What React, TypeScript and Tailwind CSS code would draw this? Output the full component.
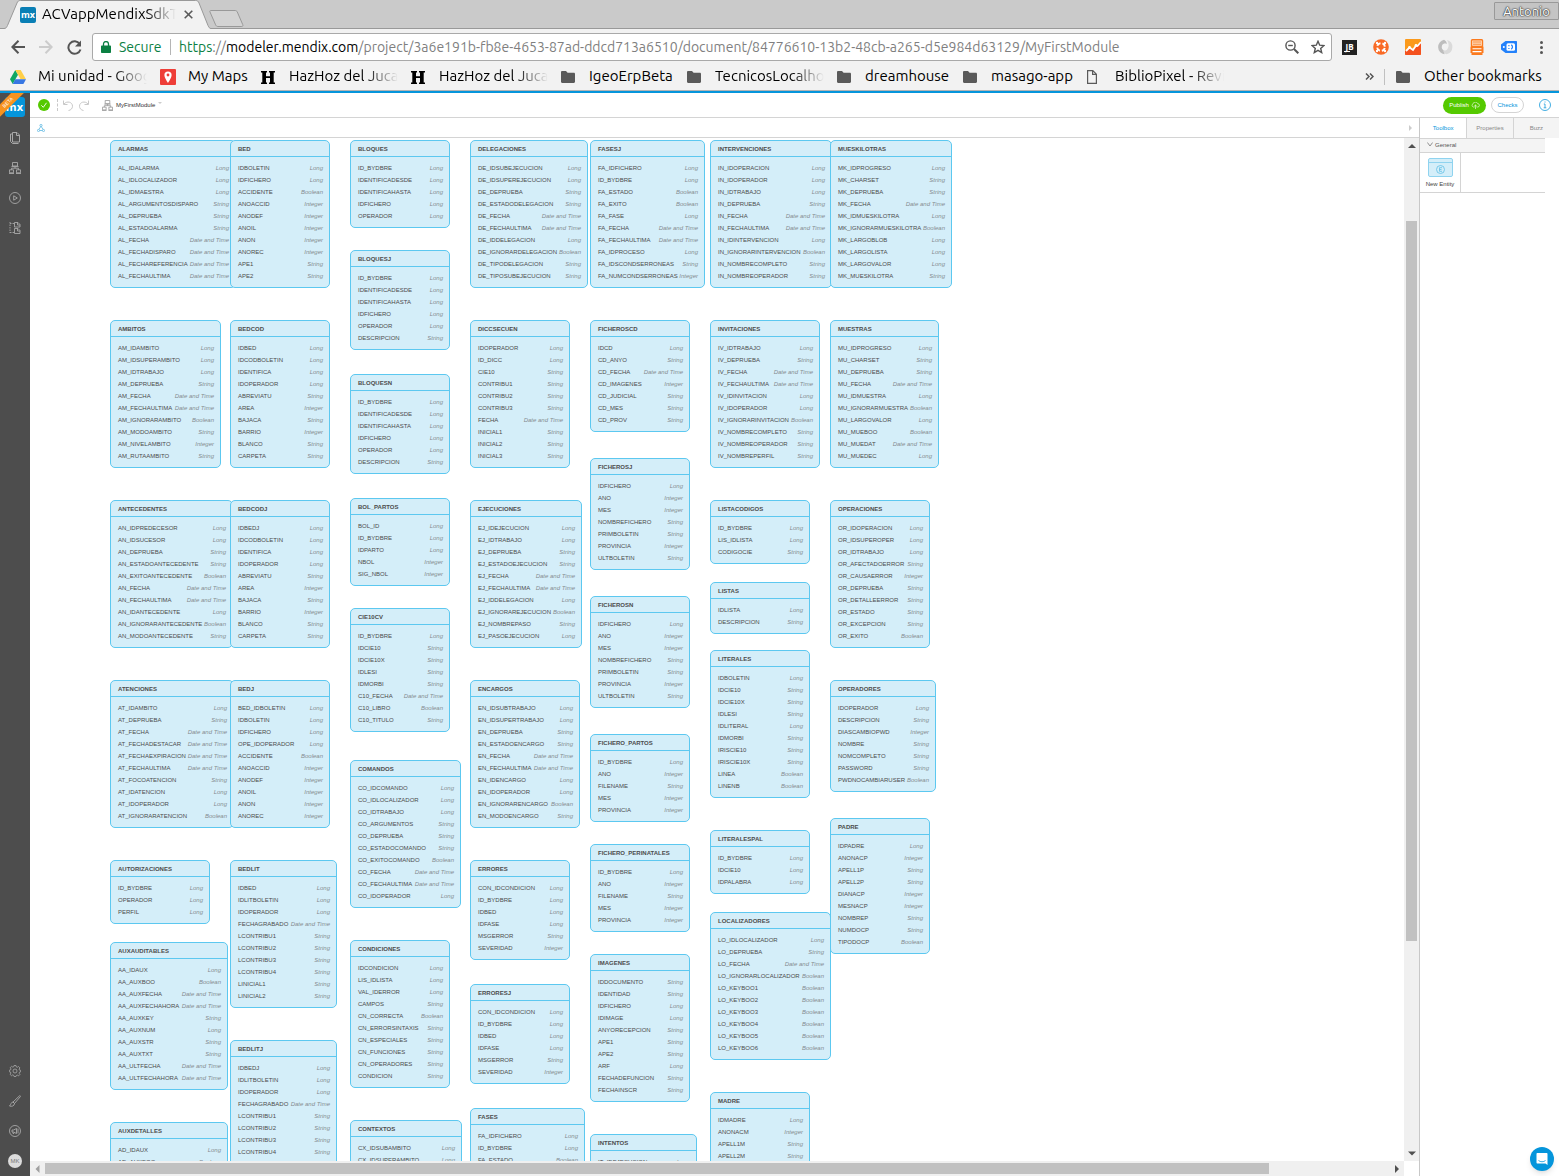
import React from 'react';

type Attr = [string, string];
type Entity = { name: string; x: number; y: number; w: number; attrs: Attr[] };

const TYPES: Record<string, string> = {
  L: 'Long',
  S: 'String',
  B: 'Boolean',
  I: 'Integer',
  D: 'Date and Time',
};

function entity(name: string, x: number, y: number, w: number, attrs: string): Entity {
  return {
    name,
    x,
    y,
    w,
    attrs: attrs.split(' ').map((a) => {
      const [n, t] = a.split(':');
      return [n, TYPES[t]] as Attr;
    }),
  };
}

const ENTITIES: Entity[] = [
  entity('ALARMAS', 80, 2, 126, 'AL_IDALARMA:L AL_IDLOCALIZADOR:L AL_IDMAESTRA:L AL_ARGUMENTOSDISPARO:S AL_DEPRUEBA:S AL_ESTADOALARMA:S AL_FECHA:D AL_FECHADISPARO:D AL_FECHAREFERENCIA:D AL_FECHAULTIMA:D'),
  entity('AMBITOS', 80, 182, 111, 'AM_IDAMBITO:L AM_IDSUPERAMBITO:L AM_IDTRABAJO:L AM_DEPRUEBA:S AM_FECHA:D AM_FECHAULTIMA:D AM_IGNORARAMBITO:B AM_MODOAMBITO:S AM_NIVELAMBITO:I AM_RUTAAMBITO:S'),
  entity('ANTECEDENTES', 80, 362, 123, 'AN_IDPREDECESOR:L AN_IDSUCESOR:L AN_DEPRUEBA:S AN_ESTADOANTECEDENTE:S AN_EXITOANTECEDENTE:B AN_FECHA:D AN_FECHAULTIMA:D AN_IDANTECEDENTE:L AN_IGNORARANTECEDENTE:B AN_MODOANTECEDENTE:S'),
  entity('ATENCIONES', 80, 542, 124, 'AT_IDAMBITO:L AT_DEPRUEBA:S AT_FECHA:D AT_FECHADESTACAR:D AT_FECHAEXPIRACION:D AT_FECHAULTIMA:D AT_FOCOATENCION:S AT_IDATENCION:L AT_IDOPERADOR:L AT_IGNORARATENCION:B'),
  entity('AUTORIZACIONES', 80, 722, 100, 'ID_BYDBRE:L OPERADOR:L PERFIL:L'),
  entity('AUXAUDITABLES', 80, 804, 118, 'AA_IDAUX:L AA_AUXBOO:B AA_AUXFECHA:D AA_AUXFECHAHORA:D AA_AUXKEY:S AA_AUXNUM:L AA_AUXSTR:S AA_AUXTXT:S AA_ULTFECHA:D AA_ULTFECHAHORA:D'),
  entity('AUXDETALLES', 80, 984, 118, 'AD_IDAUX:L AD_AUXBOO:B AD_AUXFECHA:D'),
  entity('BED', 200, 2, 100, 'IDBOLETIN:L IDFICHERO:L ACCIDENTE:B ANOACCID:I ANODEF:I ANOIL:I ANON:I ANOREC:I APE1:S APE2:S'),
  entity('BEDCOD', 200, 182, 100, 'IDBED:L IDCODBOLETIN:L IDENTIFICA:L IDOPERADOR:L ABREVIATU:S AREA:I BAJACA:S BARRIO:I BLANCO:S CARPETA:S'),
  entity('BEDCODJ', 200, 362, 100, 'IDBEDJ:L IDCODBOLETIN:L IDENTIFICA:L IDOPERADOR:L ABREVIATU:S AREA:I BAJACA:S BARRIO:I BLANCO:S CARPETA:S'),
  entity('BEDJ', 200, 542, 100, 'BED_IDBOLETIN:L IDBOLETIN:L IDFICHERO:L OPE_IDOPERADOR:L ACCIDENTE:B ANOACCID:I ANODEF:I ANOIL:I ANON:I ANOREC:I'),
  entity('BEDLIT', 200, 722, 107, 'IDBED:L IDLITBOLETIN:L IDOPERADOR:L FECHAGRABADO:D LCONTRIBU1:S LCONTRIBU2:S LCONTRIBU3:S LCONTRIBU4:S LINICIAL1:S LINICIAL2:S'),
  entity('BEDLITJ', 200, 902, 107, 'IDBEDJ:L IDLITBOLETIN:L IDOPERADOR:L FECHAGRABADO:D LCONTRIBU1:S LCONTRIBU2:S LCONTRIBU3:S LCONTRIBU4:S LINICIAL1:S LINICIAL2:S'),
  entity('BLOQUES', 320, 2, 100, 'ID_BYDBRE:L IDENTIFICADESDE:L IDENTIFICAHASTA:L IDFICHERO:L OPERADOR:L'),
  entity('BLOQUESJ', 320, 112, 100, 'ID_BYDBRE:L IDENTIFICADESDE:L IDENTIFICAHASTA:L IDFICHERO:L OPERADOR:L DESCRIPCION:S'),
  entity('BLOQUESN', 320, 236, 100, 'ID_BYDBRE:L IDENTIFICADESDE:L IDENTIFICAHASTA:L IDFICHERO:L OPERADOR:L DESCRIPCION:S'),
  entity('BOL_PARTOS', 320, 360, 100, 'BOL_ID:L ID_BYDBRE:L IDPARTO:L NBOL:I SIG_NBOL:I'),
  entity('CIE10CV', 320, 470, 100, 'ID_BYDBRE:L IDCIE10:S IDCIE10X:S IDLESI:S IDMORBI:S C10_FECHA:D C10_LIBRO:B C10_TITULO:S'),
  entity('COMANDOS', 320, 622, 111, 'CO_IDCOMANDO:L CO_IDLOCALIZADOR:L CO_IDTRABAJO:L CO_ARGUMENTOS:S CO_DEPRUEBA:S CO_ESTADOCOMANDO:S CO_EXITOCOMANDO:B CO_FECHA:D CO_FECHAULTIMA:D CO_IDOPERADOR:L'),
  entity('CONDICIONES', 320, 802, 100, 'IDCONDICION:L LIS_IDLISTA:L VAL_IDERROR:L CAMPOS:S CN_CORRECTA:B CN_ERRORSINTAXIS:S CN_ESPECIALES:S CN_FUNCIONES:S CN_OPERADORES:S CONDICION:S'),
  entity('CONTEXTOS', 320, 982, 112, 'CX_IDSUBAMBITO:L CX_IDSUPERAMBITO:L CX_DEPRUEBA:S'),
  entity('DELEGACIONES', 440, 2, 118, 'DE_IDSUBEJECUCION:L DE_IDSUPEREJECUCION:L DE_DEPRUEBA:S DE_ESTADODELEGACION:S DE_FECHA:D DE_FECHAULTIMA:D DE_IDDELEGACION:L DE_IGNORARDELEGACION:B DE_TIPODELEGACION:S DE_TIPOSUBEJECUCION:S'),
  entity('DICCSECUEN', 440, 182, 100, 'IDOPERADOR:L ID_DICC:L CIE10:S CONTRIBU1:S CONTRIBU2:S CONTRIBU3:S FECHA:D INICIAL1:S INICIAL2:S INICIAL3:S'),
  entity('EJECUCIONES', 440, 362, 112, 'EJ_IDEJECUCION:L EJ_IDTRABAJO:L EJ_DEPRUEBA:S EJ_ESTADOEJECUCION:S EJ_FECHA:D EJ_FECHAULTIMA:D EJ_IDDELEGACION:L EJ_IGNORAREJECUCION:B EJ_NOMBREPASO:S EJ_PASOEJECUCION:L'),
  entity('ENCARGOS', 440, 542, 110, 'EN_IDSUBTRABAJO:L EN_IDSUPERTRABAJO:L EN_DEPRUEBA:S EN_ESTADOENCARGO:S EN_FECHA:D EN_FECHAULTIMA:D EN_IDENCARGO:L EN_IDOPERADOR:L EN_IGNORARENCARGO:B EN_MODOENCARGO:S'),
  entity('ERRORES', 440, 722, 100, 'CON_IDCONDICION:L ID_BYDBRE:L IDBED:L IDFASE:L MSGERROR:S SEVERIDAD:I'),
  entity('ERRORESJ', 440, 846, 100, 'CON_IDCONDICION:L ID_BYDBRE:L IDBED:L IDFASE:L MSGERROR:S SEVERIDAD:I'),
  entity('FASES', 440, 970, 115, 'FA_IDFICHERO:L ID_BYDBRE:L FA_ESTADO:B FA_EXITO:B'),
  entity('FASESJ', 560, 2, 115, 'FA_IDFICHERO:L ID_BYDBRE:L FA_ESTADO:B FA_EXITO:B FA_FASE:L FA_FECHA:D FA_FECHAULTIMA:D FA_IDPROCESO:L FA_IDSCONDSERRONEAS:S FA_NUMCONDSERRONEAS:I'),
  entity('FICHEROSCD', 560, 182, 100, 'IDCD:L CD_ANYO:S CD_FECHA:D CD_IMAGENES:I CD_JUDICIAL:S CD_MES:S CD_PROV:S'),
  entity('FICHEROSJ', 560, 320, 100, 'IDFICHERO:L ANO:I MES:I NOMBREFICHERO:S PRIMBOLETIN:S PROVINCIA:I ULTBOLETIN:S'),
  entity('FICHEROSN', 560, 458, 100, 'IDFICHERO:L ANO:I MES:I NOMBREFICHERO:S PRIMBOLETIN:S PROVINCIA:I ULTBOLETIN:S'),
  entity('FICHERO_PARTOS', 560, 596, 100, 'ID_BYDBRE:L ANO:I FILENAME:S MES:I PROVINCIA:I'),
  entity('FICHERO_PERINATALES', 560, 706, 100, 'ID_BYDBRE:L ANO:I FILENAME:S MES:I PROVINCIA:I'),
  entity('IMAGENES', 560, 816, 100, 'IDDOCUMENTO:S IDENTIDAD:S IDFICHERO:L IDIMAGE:L ANYORECEPCION:S APE1:S APE2:S ARF:L FECHADEFUNCION:S FECHAINSCR:S'),
  entity('INTENTOS', 560, 996, 107, 'IT_IDEJECUCION:L IT_DEPRUEBA:S'),
  entity('INTERVENCIONES', 680, 2, 122, 'IN_IDOPERACION:L IN_IDOPERADOR:L IN_IDTRABAJO:L IN_DEPRUEBA:S IN_FECHA:D IN_FECHAULTIMA:D IN_IDINTERVENCION:L IN_IGNORARINTERVENCION:B IN_NOMBRECOMPLETO:S IN_NOMBREOPERADOR:S'),
  entity('INVITACIONES', 680, 182, 110, 'IV_IDTRABAJO:L IV_DEPRUEBA:S IV_FECHA:D IV_FECHAULTIMA:D IV_IDINVITACION:L IV_IDOPERADOR:L IV_IGNORARINVITACION:B IV_NOMBRECOMPLETO:S IV_NOMBREOPERADOR:S IV_NOMBREPERFIL:S'),
  entity('LISTACODIGOS', 680, 362, 100, 'ID_BYDBRE:L LIS_IDLISTA:L CODIGOCIE:S'),
  entity('LISTAS', 680, 444, 100, 'IDLISTA:L DESCRIPCION:S'),
  entity('LITERALES', 680, 512, 100, 'IDBOLETIN:L IDCIE10:S IDCIE10X:S IDLESI:S IDLITERAL:L IDMORBI:S IRISCIE10:S IRISCIE10X:S LINEA:B LINENB:B'),
  entity('LITERALESPAL', 680, 692, 100, 'ID_BYDBRE:L IDCIE10:L IDPALABRA:L'),
  entity('LOCALIZADORES', 680, 774, 121, 'LO_IDLOCALIZADOR:L LO_DEPRUEBA:S LO_FECHA:D LO_IGNORARLOCALIZADOR:B LO_KEYBOO1:B LO_KEYBOO2:B LO_KEYBOO3:B LO_KEYBOO4:B LO_KEYBOO5:B LO_KEYBOO6:B'),
  entity('MADRE', 680, 954, 100, 'IDMADRE:L ANONACM:I APELL1M:S APELL2M:S DIANACM:I'),
  entity('MUESKILOTRAS', 800, 2, 122, 'MK_IDPROGRESO:L MK_CHARSET:S MK_DEPRUEBA:S MK_FECHA:D MK_IDMUESKILOTRA:L MK_IGNORARMUESKILOTRA:B MK_LARGOBLOB:L MK_LARGOLISTA:L MK_LARGOVALOR:L MK_MUESKILOTRA:S'),
  entity('MUESTRAS', 800, 182, 109, 'MU_IDPROGRESO:L MU_CHARSET:S MU_DEPRUEBA:S MU_FECHA:D MU_IDMUESTRA:L MU_IGNORARMUESTRA:B MU_LARGOVALOR:L MU_MUEBOO:B MU_MUEDAT:D MU_MUEDEC:L'),
  entity('OPERACIONES', 800, 362, 100, 'OR_IDOPERACION:L OR_IDSUPEROPER:L OR_IDTRABAJO:L OR_AFECTADOERROR:S OR_CAUSAERROR:I OR_DEPRUEBA:S OR_DETALLEERROR:S OR_ESTADO:S OR_EXCEPCION:S OR_EXITO:B'),
  entity('OPERADORES', 800, 542, 106, 'IDOPERADOR:L DESCRIPCION:S DIASCAMBIOPWD:I NOMBRE:S NOMCOMPLETO:S PASSWORD:S PWDNOCAMBIARUSER:B'),
  entity('PADRE', 800, 680, 100, 'IDPADRE:L ANONACP:I APELL1P:S APELL2P:S DIANACP:I MESNACP:I NOMBREP:S NUMDOCP:S TIPODOCP:B'),
];

function EntityCard({ e }: { e: Entity }) {
  return (
    <section
      className="absolute overflow-hidden rounded-[5px] border border-[#5cc8f0] bg-[#d4eef9]"
      style={{ left: e.x, top: e.y, width: e.w }}
    >
      <h3 className="h-4 border-b border-[#5cc8f0] pl-[7px] text-[6px] leading-[16px] font-bold text-[#4c4c4c]">
        {e.name}
      </h3>
      <ul className="py-[5px] pr-[6px] pl-[7px]">
        {e.attrs.map(([n, t]) => (
          <li key={n} className="flex h-3 justify-between text-[6px] leading-[12px] whitespace-nowrap">
            <span className="text-[#4c4c4c]">{n}</span>
            <span className="text-[#848c90] italic">{t}</span>
          </li>
        ))}
      </ul>
    </section>
  );
}

function Folder() {
  return (
    <svg viewBox="0 0 14 12" className="h-3 w-3.5" fill="#5a5a5a">
      <path d="M1.200 0H5l1.600 1.800h6.200c.7 0 1.200.5 1.200 1.200v7.800c0 .7-.5 1.200-1.200 1.200H1.200C.5 12 0 11.500 0 10.800V1.200C0 .5.5 0 1.200 0z" />
    </svg>
  );
}

function DriveIcon() {
  return (
    <svg viewBox="0 0 16 14" className="h-3.5 w-4">
      <path d="M5.300 0 0 9.300 2.700 14 8 4.700z" fill="#11a861" />
      <path d="M5.300 0h5.400L16 9.300h-5.400z" fill="#ffcf48" />
      <path d="M2.700 14 5.300 9.300H16L13.400 14z" fill="#3777e3" />
    </svg>
  );
}

function MapsIcon() {
  return (
    <svg viewBox="0 0 16 16" className="h-4 w-4">
      <rect width="16" height="16" rx="1" fill="#ee3e38" />
      <path d="M8 2.500a3.600 3.600 0 0 0-3.600 3.600C4.400 9 8 14 8 14s3.600-5 3.600-7.900A3.600 3.600 0 0 0 8 2.500z" fill="#fff" />
      <circle cx="8" cy="6" r="1.400" fill="#ee3e38" />
    </svg>
  );
}

function HIcon() {
  return (
    <svg viewBox="0 0 14 13" className="mt-0.5 h-[13px] w-3.5" fill="#000">
      <path d="M0 0h6v1.500H5v3.700h4V1.500H8V0h6v1.500h-1.300v10H14V13H8v-1.500h1V7H5v4.500h1V13H0v-1.500h1.300v-10H0z" />
    </svg>
  );
}

function PageIcon() {
  return (
    <svg viewBox="0 0 10 14" className="h-3.5 w-2.5" fill="none" stroke="#5a5a5a" strokeWidth="1.200">
      <path d="M.6.6h5.200l3.600 3.600v9.200H.6z M5.600.6v3.800h3.800" />
    </svg>
  );
}

const BOOKMARKS: { label: string; width: string; icon: React.ReactNode; fade?: boolean }[] = [
  { label: 'Mi unidad - Google', width: 'w-[109px]', icon: <DriveIcon />, fade: true },
  { label: 'My Maps', width: 'w-[60px]', icon: <MapsIcon /> },
  { label: 'HazHoz del Jucar', width: 'w-[109px]', icon: <HIcon />, fade: true },
  { label: 'HazHoz del Jucar', width: 'w-[109px]', icon: <HIcon />, fade: true },
  { label: 'IgeoErpBeta', width: 'w-[85px]', icon: <Folder /> },
  { label: 'TecnicosLocalhost', width: 'w-[109px]', icon: <Folder />, fade: true },
  { label: 'dreamhouse', width: 'w-[85px]', icon: <Folder /> },
  { label: 'masago-app', width: 'w-[83px]', icon: <Folder /> },
  { label: 'BiblioPixel - Review', width: 'w-[109px]', icon: <PageIcon />, fade: true },
];

function TabStrip() {
  return (
    <div className="flex h-[29px] shrink-0 items-start justify-between border-b border-[#999] bg-[#cacaca]">
      <div className="flex">
        <div className="relative h-[29px] w-[211px]">
          <svg viewBox="0 0 211 29" className="absolute inset-0 h-[29px] w-[211px]">
            <path d="M0 28.500h4c2 0 2.500-1 3.500-3L17 3c.8-1.800 1.500-2.500 3.500-2.500h175c2 0 2.700.7 3.500 2.500l9 22.500c1 2 1.500 3 3 3V29H0z" fill="#f2f2f2" />
            <path d="M0 28.500h4c2 0 2.500-1 3.500-3L17 3c.8-1.800 1.500-2.500 3.500-2.500h175c2 0 2.700.7 3.500 2.500l9 22.500c1 2 1.500 3 3 3" fill="none" stroke="#999" />
          </svg>
          <div className="relative flex h-[29px] items-center pl-5">
            <span className="flex h-4 w-4 items-center justify-center rounded-[2px] bg-[#0a7fb5] font-['Open_Sans',sans-serif] text-[9px] leading-4 font-bold text-white">mx</span>
            <span className="ml-1.5 w-[134px] overflow-hidden text-[15px] whitespace-nowrap text-black [mask-image:linear-gradient(to_right,black_78%,transparent)]">
              ACVappMendixSdkT
            </span>
            <button aria-label="Close tab" className="ml-2">
              <svg viewBox="0 0 9 9" className="h-[9px] w-[9px]" stroke="#5a5a5a" strokeWidth="1.600">
                <path d="M.7.7l7.600 7.600M8.300.7.7 8.300" />
              </svg>
            </button>
          </div>
        </div>
        <button aria-label="New tab" className="mt-[7px] -ml-0.5">
          <svg viewBox="0 0 35 17" className="h-[17px] w-[35px]" fill="#d3d3d3" stroke="#999">
            <path d="M2 .5h24c1 0 1.800.4 2.300 1.500l5.400 12.500c.5 1.200.2 2-.9 2H9c-1.200 0-1.900-.5-2.400-1.700L1 2C.6 1 .9.500 2 .5z" />
          </svg>
        </button>
      </div>
      <button className="mt-0.5 h-[18px] w-[65px] rounded-[1px] border border-[#999] bg-[#c4c4c4] text-[13px] leading-4 text-white [text-shadow:0_0_1px_#333,0_0_1px_#333,0_0_2px_#333]">
        Antonio
      </button>
    </div>
  );
}

function AddressBar() {
  return (
    <div className="flex h-[36px] shrink-0 items-center bg-[#f2f2f2] pr-3 pl-[11px]">
      <button aria-label="Back">
        <svg viewBox="0 0 14 14" className="h-3.5 w-3.5" fill="none" stroke="#555" strokeWidth="2">
          <path d="M14 7H1.500M7.500.8 1.400 7l6.100 6.200" />
        </svg>
      </button>
      <button aria-label="Forward" className="ml-3.5">
        <svg viewBox="0 0 14 14" className="h-3.5 w-3.5" fill="none" stroke="#ccc" strokeWidth="2">
          <path d="M0 7h12.500M6.500.8 12.600 7l-6.100 6.200" />
        </svg>
      </button>
      <button aria-label="Reload" className="ml-3.5">
        <svg viewBox="0 0 15 15" className="h-[15px] w-[15px]" fill="none" stroke="#555" strokeWidth="2">
          <path d="M12.700 4A6.200 6.200 0 1 0 13.500 9.500" />
          <path d="M14 .5v6H8z" fill="#555" stroke="none" />
        </svg>
      </button>
      <div className="ml-2.5 flex h-7 min-w-0 flex-1 items-center rounded-[3px] border border-[#a9a9a9] bg-white pl-2">
        <svg viewBox="0 0 10 12" className="h-3 w-2.5" fill="#0b8043">
          <path d="M1 4.500h8c.5 0 1 .4 1 1V11c0 .6-.5 1-1 1H1c-.5 0-1-.4-1-1V5.500c0-.6.5-1 1-1z" />
          <path d="M2.500 5V3a2.500 2.500 0 0 1 5 0v2" fill="none" stroke="#0b8043" strokeWidth="1.300" />
        </svg>
        <span className="ml-2 w-[43px] text-[14px] whitespace-nowrap text-[#0b8043]">Secure</span>
        <span className="mx-2 h-4 w-px bg-[#b5b5b5]" />
        <div className="min-w-0 flex-1 overflow-hidden text-[14px] whitespace-nowrap text-[#7f7f7f]">
          <span className="text-[#0b8043]">https</span>://<span className="text-black">modeler.mendix.com</span>
          /project/3a6e191b-fb8e-4653-87ad-ddcd713a6510/document/84776610-13b2-48cb-a265-d5e984d63129/MyFirstModule
        </div>
        <button aria-label="Zoom out" className="mr-3">
          <svg viewBox="0 0 14 14" className="h-3.5 w-3.5" fill="none" stroke="#555" strokeWidth="1.400">
            <circle cx="5.500" cy="5.500" r="4.600" />
            <path d="M9 9l4.300 4.300" strokeWidth="2" />
            <path d="M3.200 5.500h4.600" />
          </svg>
        </button>
        <button aria-label="Bookmark this page" className="mr-1.5">
          <svg viewBox="0 0 14 14" className="h-3.5 w-3.5" fill="none" stroke="#555" strokeWidth="1.400">
            <path d="M7 1.300l1.700 3.900 4.200.4-3.200 2.800 1 4.200L7 10.400l-3.700 2.200 1-4.200L1.100 5.600l4.200-.4z" />
          </svg>
        </button>
      </div>
      <div className="ml-2.5 flex items-center gap-4">
        <span className="flex h-[15px] w-[15px] flex-col items-center justify-center bg-[#222] font-['Open_Sans',sans-serif] text-[8px] leading-[8px] font-bold text-white">
          JB
          <span className="mr-1.5 h-px w-1.5 bg-white" />
        </span>
        <svg viewBox="0 0 16 16" className="h-4 w-4">
          <circle cx="8" cy="8" r="7.800" fill="#f96a25" />
          <circle cx="8" cy="8" r="3.900" fill="none" stroke="#fff" strokeWidth="2" strokeDasharray="4.100 2.030" strokeDashoffset="-1" />
          <circle cx="4" cy="4" r="1.200" fill="#fff" />
          <circle cx="12" cy="4" r="1.200" fill="#fff" />
          <circle cx="4" cy="12" r="1.200" fill="#fff" />
          <circle cx="12" cy="12" r="1.200" fill="#fff" />
        </svg>
        <svg viewBox="0 0 16 16" className="h-4 w-4">
          <rect width="16" height="16" rx="1" fill="#fb9a1c" />
          <path d="M0 12l4-3 4 2 8-7.500V15a1 1 0 0 1-1 1H1a1 1 0 0 1-1-1z" fill="#f4511e" />
          <path d="M1 12l3.500-3.500L8 11l3-4.500 1.500.5L16 3" fill="none" stroke="#fff" strokeWidth="1.800" />
          <circle cx="4.500" cy="8.500" r="1.400" fill="#fff" />
          <circle cx="11" cy="6.500" r="1.400" fill="#fff" />
        </svg>
        <svg viewBox="0 0 16 16" className="h-4 w-4">
          <path d="M7 .8A7.300 7.300 0 0 0 7.500 15.200V12A4.200 4.200 0 0 1 5 6.500C6 4.500 8 4 10 5 9.500 3 8.500 1.500 7 .8z" fill="#bdbdbd" />
          <path d="M9.500 15.200A7.300 7.300 0 0 0 10 1c1.500 2.500 2.500 6 .5 9-1 1.400-3 2-4.500 1.200.5 2 1.700 3.500 3.500 4z" fill="#dadada" />
        </svg>
        <svg viewBox="0 0 16 16" className="h-4 w-4">
          <rect x="2.500" y=".7" width="11" height="6.800" rx=".8" fill="#ffe2c8" stroke="#fb7a1e" strokeWidth="1.400" />
          <path d="M4 3h8M4 5.200h8" stroke="#fb7a1e" strokeWidth=".9" />
          <path d="M1.500 7.500h13V14h-1v2h-11v-2h-1z" fill="#fb7a1e" />
          <path d="M3.500 9.800h9M3.500 12.600h9" stroke="#fff" strokeWidth="1.100" />
        </svg>
        <svg viewBox="0 0 16 12" className="h-3 w-4">
          <path d="M4.500 0H15c.6 0 1 .4 1 1v10c0 .6-.4 1-1 1H4.500L0 8.500v-5z" fill="#2381fa" />
          <rect x="5.500" y="2.300" width="8.500" height="7.400" rx="1.500" fill="#fff" />
          <circle cx="2.800" cy="6" r="1" fill="#fff" />
          <path d="M7.300 4.700h1.200M7.300 7.500h1.200M10.300 3.800q2.400 2.200 0 4.400" stroke="#2381fa" strokeWidth="1.200" fill="none" />
        </svg>
        <button aria-label="Menu" className="ml-0.5 flex w-3 flex-col items-center gap-0.5">
          <span className="h-[3px] w-[3px] rounded-full bg-[#555]" />
          <span className="h-[3px] w-[3px] rounded-full bg-[#555]" />
          <span className="h-[3px] w-[3px] rounded-full bg-[#555]" />
        </button>
      </div>
    </div>
  );
}

function BookmarksBar() {
  return (
    <nav className="flex h-[26px] shrink-0 items-center border-b border-[#b4b4b4] bg-[#f2f2f2] pr-3.5 pb-0.5 pl-2.5 text-[15px] text-black">
      <div className="flex min-w-0 flex-1 gap-[13px] overflow-hidden">
        {BOOKMARKS.map((b, i) => (
          <a key={i} href="#" className="flex items-center">
            <span className="flex w-7 items-center">{b.icon}</span>
            <span
              className={
                b.width +
                ' whitespace-nowrap' +
                (b.fade ? ' overflow-hidden [mask-image:linear-gradient(to_right,black_70%,transparent)]' : '')
              }
            >
              {b.label}
            </span>
          </a>
        ))}
      </div>
      <button aria-label="More bookmarks" className="mr-2.5">
        <svg viewBox="0 0 9 7" className="h-[7px] w-[9px]" fill="none" stroke="#555" strokeWidth="1.500">
          <path d="M1 .5l3 3-3 3M5 .5l3 3-3 3" />
        </svg>
      </button>
      <span className="mr-[11px] h-4 w-px bg-[#c0c0c0]" />
      <a href="#" className="flex items-center">
        <span className="w-7"><Folder /></span>
        <span className="w-[121px] whitespace-nowrap">Other bookmarks</span>
      </a>
    </nav>
  );
}

function HierarchyIcon({ className }: { className: string }) {
  return (
    <svg viewBox="0 0 12 12" className={className} fill="none" stroke="currentColor" strokeWidth=".9">
      <path d="M3.500.5h5V4h-5zM2.500 4.500h7M.5 7.800h4v3h-4zM7.500 7.800h4v3h-4zM0 11.500h5M7 11.500h5M6 4.500v1.700M2.500 7.800V6.200h7v1.600" />
    </svg>
  );
}

function Sidebar() {
  return (
    <aside className="flex w-[30px] shrink-0 flex-col items-center justify-between bg-[#4d4d4d] text-[#a8a8a8]">
      <div className="flex flex-col items-center">
        <div className="relative h-[30px] w-[30px] overflow-hidden">
          <span className="absolute top-1 left-[5px] flex h-5 w-5 items-center justify-end rounded-[3px] bg-[#0595db] pr-0.5 font-['Open_Sans',sans-serif] text-[11px] leading-5 font-bold text-white">
            mx
          </span>
          <span className="absolute top-[5px] -left-[13px] h-[9px] w-[42px] -rotate-45 bg-[#f7931e] text-center text-[5px] leading-[9px] text-white">
            BETA
          </span>
        </div>
        <button aria-label="Documents" className="flex h-[30px] items-center">
          <svg viewBox="0 0 12 12" className="h-3 w-3" fill="none" stroke="currentColor">
            <path d="M3.500.5H8L10.500 3v7h-7zM7.500.5v3h3M3 2H1.500v7.500l2 2h6" />
          </svg>
        </button>
        <button aria-label="Domain model" className="flex h-[30px] items-center">
          <HierarchyIcon className="h-3 w-3" />
        </button>
        <button aria-label="Run" className="flex h-[30px] items-center">
          <svg viewBox="0 0 12 12" className="h-3 w-3" fill="none" stroke="currentColor" strokeWidth=".9">
            <circle cx="6" cy="6" r="5.500" />
            <path d="M4.700 3.800v4.400L8.300 6z" />
          </svg>
        </button>
        <button aria-label="Structure" className="flex h-[30px] items-center">
          <svg viewBox="0 0 12 12" className="h-3 w-3" fill="none" stroke="currentColor" strokeWidth=".9">
            <path d="M1 0v11M1 1.500h4M1 10.500h4" strokeDasharray="1.500 1" />
            <path d="M5.500.5H9l2 2V5H5.500zM5.500 6.500H9l2 2v3H5.500zM8.500.5V3H11M8.500 6.500V9H11" />
          </svg>
        </button>
      </div>
      <div className="flex flex-col items-center">
        <button aria-label="Settings" className="flex h-[30px] items-center">
          <svg viewBox="0 0 12 12" className="h-3 w-3" fill="none" stroke="currentColor" strokeWidth=".8">
            <circle cx="6" cy="6" r="2" />
            <path d="M5 .5h2l.3 1.400 1 .4 1.200-.8 1.400 1.400-.8 1.200.4 1 1.100.2v1.600l-1.100.3-.4 1 .8 1.300-1.400 1.400-1.200-.8-1 .4L7 11.500H5l-.3-1.200-1-.4-1.200.8-1.400-1.400.8-1.200-.4-1L.4 6.800V5.200l1.200-.3.4-1-.8-1.200 1.400-1.400 1.200.8 1-.4z" />
          </svg>
        </button>
        <button aria-label="Theme" className="flex h-[30px] items-center">
          <svg viewBox="0 0 12 12" className="h-3 w-3" fill="none" stroke="currentColor" strokeWidth=".9">
            <path d="M4 7 10.500.8c.6-.4 1.300.3.800.9L5.500 8.500zM4 7c-2 0-1.800 2.500-3.500 4 2 .8 5 0 5-2.500z" />
          </svg>
        </button>
        <button aria-label="Feedback" className="flex h-[30px] items-center">
          <svg viewBox="0 0 12 12" className="h-3 w-3" fill="none" stroke="currentColor" strokeWidth=".9">
            <circle cx="6" cy="6" r="5.500" />
            <path d="M3 5v2h1.500L7.500 8.500v-5L4.500 5zM9 3.500v5M4 7v1.500h1.200" />
          </svg>
        </button>
        <button className="my-2 h-3.5 w-3.5 rounded-full bg-[#dcdcdc] text-[6px] leading-[14px] text-[#777]">MK</button>
      </div>
    </aside>
  );
}

function TopBar() {
  return (
    <header className="flex h-[25px] shrink-0 items-center border-b border-[#d4d4d4] bg-white pr-2 pl-2">
      <svg viewBox="0 0 12 12" className="h-3 w-3">
        <circle cx="6" cy="6" r="6" fill="#55c900" />
        <path d="M3.300 6.300 5.300 8.300 8.500 3.800" fill="none" stroke="#fff" strokeWidth=".9" />
      </svg>
      <span className="ml-[7px] h-3 border-l border-dashed border-[#c8c8c8]" />
      <button aria-label="Undo" className="ml-[5px]">
        <svg viewBox="0 0 10 11" className="h-[11px] w-2.5" fill="none" stroke="#c8c8c8">
          <path d="M.5.500v4h4M1 4c3-3.500 8.500-2 8.500 2.200 0 2.300-1.700 4-4 4.300" />
        </svg>
      </button>
      <button aria-label="Redo" className="ml-1.5">
        <svg viewBox="0 0 10 11" className="h-[11px] w-2.5" fill="none" stroke="#c8c8c8">
          <path d="M9.500.500v4h-4M9 4C6 .500.500 2 .5 6.200c0 2.300 1.700 4 4 4.300" />
        </svg>
      </button>
      <span className="ml-[13px] text-[#999]">
        <HierarchyIcon className="h-[11px] w-[11px]" />
      </span>
      <button className="ml-[3px] flex items-center text-[6px] leading-3 text-[#333]">
        MyFirstModule
        <span className="ml-[3px] -mt-1 border-x-2 border-t-2 border-x-transparent border-t-[#ccc]" />
      </button>
      <div className="ml-auto flex items-center">
        <button className="flex h-[17px] w-[43px] items-center justify-center gap-0.5 rounded-full bg-[#55c900] text-[6px] text-white">
          Publish
          <svg viewBox="0 0 9 7" className="h-[7px] w-[9px]" fill="none" stroke="#fff" strokeWidth=".6">
            <path d="M3.500 5H2.200A1.700 1.700 0 0 1 2 1.900 2.400 2.400 0 0 1 6.600 1.600 1.700 1.700 0 0 1 6.800 5H5.500M4.500 7V3M3.200 4.200 4.500 3l1.300 1.200" />
          </svg>
        </button>
        <button className="ml-[5px] h-4 w-[33px] rounded-full border border-[#d4d4d4] text-[6px] text-[#0595db]">Checks</button>
        <button aria-label="Information" className="ml-[15px]">
          <svg viewBox="0 0 12 12" className="h-3 w-3" fill="none" stroke="#2fa5df" strokeWidth=".9">
            <circle cx="6" cy="6" r="5.500" />
            <path d="M4.800 5H6v3.800M4.700 8.800h2.600M5.500 3h1" />
          </svg>
        </button>
      </div>
    </header>
  );
}

function ScrollArrow({ className, d }: { className: string; d: string }) {
  return (
    <span className={className}>
      <svg viewBox="0 0 8 8" className="h-2 w-2" fill="currentColor">
        <path d={d} />
      </svg>
    </span>
  );
}

function Canvas() {
  return (
    <main className="flex min-w-0 flex-1 flex-col">
      <div className="flex h-5 shrink-0 items-center justify-between border-b border-[#d4d4d4] pr-[7px] pl-[7px]">
        <svg viewBox="0 0 8 8" className="h-2 w-2" fill="none" stroke="#5fb9e2" strokeWidth=".8">
          <circle cx="4" cy="1.500" r="1.100" />
          <circle cx="1.500" cy="6.500" r="1.100" />
          <circle cx="6.500" cy="6.500" r="1.100" />
          <path d="M3.700 2.600 2 5.400M4.300 2.600 6 5.400M2.600 6.500h2.800" />
        </svg>
        <span className="border-y-[3px] border-l-[3px] border-y-transparent border-l-[#ccc]" />
      </div>
      <div className="flex min-h-0 flex-1">
        <div className="relative min-w-0 flex-1 overflow-hidden bg-white">
          {ENTITIES.map((e) => (
            <EntityCard key={e.name} e={e} />
          ))}
        </div>
        <div className="flex w-[15px] shrink-0 flex-col bg-[#f0f0f0] px-0.5">
          <ScrollArrow className="flex h-[15px] items-center justify-center text-[#505050]" d="M4 2 8 6H0z" />
          <span className="flex-[68]" />
          <span className="flex-[720] bg-[#c1c1c1]" />
          <span className="flex-[205]" />
          <ScrollArrow className="flex h-[15px] items-center justify-center text-[#505050]" d="M4 5.500 0 1.500h8z" />
        </div>
      </div>
      <div className="flex h-[15px] shrink-0 pr-[15px]">
        <div className="flex flex-1 bg-[#f0f0f0] py-0.5">
          <ScrollArrow className="flex w-[15px] items-center justify-center text-[#a0a0a0]" d="M1.500 4 5.500 0v8z" />
          <span className="flex-[1224] bg-[#c1c1c1]" />
          <span className="flex-[120]" />
          <ScrollArrow className="flex w-[15px] items-center justify-center text-[#505050]" d="M6 4 2 0v8z" />
        </div>
      </div>
    </main>
  );
}

function ToolPanel() {
  return (
    <aside className="w-[140px] shrink-0 border-l border-[#c8c8c8] bg-white">
      <div role="tablist" className="grid h-5 grid-cols-3 text-[6px] text-[#888]">
        <button role="tab" aria-selected="true" className="text-[#0595db]">Toolbox</button>
        <button role="tab" aria-selected="false" className="border-l border-[#d4d4d4] bg-[#f4f4f4]">Properties</button>
        <button role="tab" aria-selected="false" className="border-l border-[#d4d4d4] bg-[#f4f4f4]">Buzz</button>
      </div>
      <div className="mr-3.5 border-b border-[#d4d4d4]">
        <button className="flex h-[15px] w-full items-center gap-0.5 border-y border-[#d4d4d4] bg-[#f4f4f4] pl-[7px] text-[6px] text-[#555]">
          <svg viewBox="0 0 6 5" className="-mt-0.5 h-[5px] w-1.5" fill="none" stroke="#777" strokeWidth=".8">
            <path d="M.4.5 3 4 5.600.5" />
          </svg>
          General
        </button>
        <button className="flex h-[39px] w-[41px] flex-col items-center gap-1 border-r border-[#d4d4d4] pt-[5px] text-[6px] leading-[7px] text-[#444]">
          <svg viewBox="0 0 25 19" className="h-[19px] w-[25px]">
            <rect x=".5" y=".5" width="24" height="18" rx="1.500" fill="#d4eef9" stroke="#8fd3ef" />
            <path d="M.5 4.500h24" stroke="#8fd3ef" />
            <circle cx="12.500" cy="11.500" r="4" fill="none" stroke="#5fbfe6" strokeWidth=".8" />
            <path d="M14 9.700h-2.500v3.600H14M11.500 11.500h2" fill="none" stroke="#5fbfe6" strokeWidth=".8" />
          </svg>
          New Entity
        </button>
      </div>
    </aside>
  );
}

export default function App() {
  return (
    <div className="flex h-screen flex-col overflow-hidden bg-white font-['Ubuntu','Noto_Sans',sans-serif]">
      <TabStrip />
      <AddressBar />
      <BookmarksBar />
      <div className="flex min-h-0 flex-1 border-t-2 border-[#0595db] font-['Liberation_Sans',Arial,sans-serif]">
        <Sidebar />
        <div className="flex min-w-0 flex-1 flex-col">
          <TopBar />
          <div className="flex min-h-0 flex-1">
            <Canvas />
            <ToolPanel />
          </div>
        </div>
      </div>
      <button aria-label="Open chat" className="fixed right-[5px] bottom-[5px] flex h-6 w-6 items-center justify-center rounded-full bg-[#0595db] shadow-md">
        <svg viewBox="0 0 12 12" className="h-3 w-3">
          <path d="M1.500 0h9c.6 0 1 .4 1 1v11L9.500 10.500h-8c-.6 0-1-.4-1-1V1c0-.6.4-1 1-1z" fill="#fff" />
          <path d="M2.500 7.500c2 1.700 5 1.700 7 0" fill="none" stroke="#0595db" strokeWidth=".8" />
        </svg>
      </button>
    </div>
  );
}
